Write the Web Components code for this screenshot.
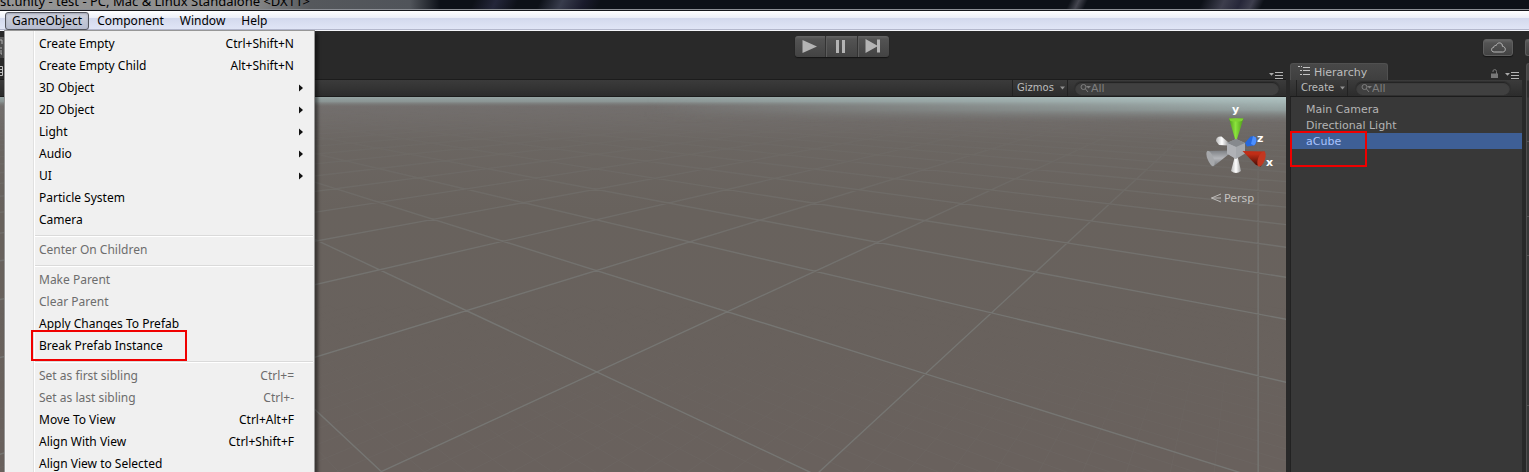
<!DOCTYPE html>
<html lang="en">
<head>
<meta charset="utf-8">
<title>Unity - test</title>
<style>
html,body{margin:0;height:100%}
body{background:#292929;overflow:hidden;font:12px/16px "Noto Sans","Open Sans",sans-serif;color:#000}
</style>
</head>
<body>
<unity-window></unity-window>
<script>
function define(name, html, setup) {
  const t = document.createElement('template');
  t.innerHTML = html;
  customElements.define(name, class extends HTMLElement {
    connectedCallback() {
      if (this.shadowRoot) return;
      this.attachShadow({mode: 'open'}).append(t.content.cloneNode(true));
      if (setup) setup(this, this.shadowRoot);
    }
  });
}

define('title-bar', `<style>
:host{display:flex;align-items:flex-end;height:9px;overflow:hidden;border-bottom:1px solid #8b8e94;box-shadow:0 1px 0 #15171c;margin-bottom:1px;
background:
linear-gradient(90deg,#969696 0,#8b8b8b 250px,#55585c 310px,#50545a 410px,transparent 440px),
linear-gradient(115deg,transparent 430px,#24263a 450px,transparent 470px,transparent 490px,#383c4c 510px,#1a1b2c 530px,transparent 545px,transparent 970px,#44454f 978px,transparent 986px,transparent 1090px,#3d3e4d 1110px,#262739 1125px,#3d3e4d 1136px,transparent 1146px,transparent 1400px,#262838 1440px,transparent 1480px),
#0d1118}
span{white-space:nowrap;font-size:13px;line-height:16px;color:#000}
</style><span><slot></slot></span>`);

define('menu-item', `<style>
:host{display:block;position:relative}
button{all:unset;box-sizing:border-box;display:flex;align-items:center;width:100%;height:22px;padding:0 20px 0 34px;font:inherit;color:#000}
span{flex:1;white-space:nowrap}
:host([disabled]) button{color:#6d6d6d}
svg{display:none;position:absolute;right:11px;top:7px}
:host([submenu]) svg{display:block}
i{display:none}
:host([marked]) i{display:block;position:absolute;left:26px;top:-5px;width:152px;height:27px;border:2px solid #f00000}
</style><button><span><slot></slot></span><kbd-hint></kbd-hint></button>
<svg width="4" height="8"><path d="M0 0.5L4 4L0 7.5Z" fill="#111"/></svg><i></i>`, (h, r) => {
  r.querySelector('kbd-hint').textContent = h.getAttribute('key') || '';
  if (h.hasAttribute('disabled')) r.querySelector('button').disabled = true;
});
define('kbd-hint', `<style>:host{display:block;white-space:nowrap}</style><slot></slot>`);
define('menu-line', `<style>:host{display:block;height:2px;margin:4px 1px 2px 30px;background:linear-gradient(#dadada 50%,#fff 50%)}</style>`);

define('drop-menu', `<style>
:host{display:block;box-sizing:border-box;width:311px;padding-top:2px;border:1px solid #979797;color:#000;
background:linear-gradient(90deg,#f5f5f5 1px,#f0f0f0 1px 28px,#e0e0e0 28px 29px,#fff 29px 30px,#f0f0f0 30px);
box-shadow:3px 3px 3px rgba(0,0,0,.45)}
</style><slot></slot>`);

define('menu-bar', `<style>
:host{display:flex;position:relative;z-index:5;height:18px;padding:0 5px;border-bottom:1px solid #b3b7cc;box-shadow:0 1px 0 #f4f5fa;margin-bottom:1px;
background:linear-gradient(#fff 0,#eceff8 7px,#d3d9ed 7px,#e0e5f6 100%)}
button{all:unset;box-sizing:border-box;height:19px;padding:0 8px;line-height:19px;font-size:12px;white-space:nowrap}
button.on{height:18px;margin-top:1px;padding:0 6px;line-height:16px;border:1px solid #54565e;border-radius:3px;background:linear-gradient(#d0d3dd,#b7bdd0);box-shadow:inset 0 1px 2px #9ea2b2}
drop-menu{position:absolute;left:4px;top:19px}
</style>
<button class="on">GameObject</button><button>Component</button><button>Window</button><button>Help</button>
<drop-menu>
<menu-item key="Ctrl+Shift+N">Create Empty</menu-item>
<menu-item key="Alt+Shift+N">Create Empty Child</menu-item>
<menu-item submenu>3D Object</menu-item>
<menu-item submenu>2D Object</menu-item>
<menu-item submenu>Light</menu-item>
<menu-item submenu>Audio</menu-item>
<menu-item submenu>UI</menu-item>
<menu-item>Particle System</menu-item>
<menu-item>Camera</menu-item>
<menu-line></menu-line>
<menu-item disabled>Center On Children</menu-item>
<menu-line></menu-line>
<menu-item disabled>Make Parent</menu-item>
<menu-item disabled>Clear Parent</menu-item>
<menu-item>Apply Changes To Prefab</menu-item>
<menu-item marked>Break Prefab Instance</menu-item>
<menu-line></menu-line>
<menu-item disabled key="Ctrl+=">Set as first sibling</menu-item>
<menu-item disabled key="Ctrl+-">Set as last sibling</menu-item>
<menu-item key="Ctrl+Alt+F">Move To View</menu-item>
<menu-item key="Ctrl+Shift+F">Align With View</menu-item>
<menu-item>Align View to Selected</menu-item>
</drop-menu>`);

define('tool-bar', `<style>
:host{display:flex;height:32px;align-items:center;background:#292929}
.a{flex:793}.b{flex:596}
.play{display:flex;height:21px;margin-bottom:2px;border-radius:3px;overflow:hidden;box-shadow:0 1px 1px #151515}
button{all:unset;box-sizing:border-box;display:flex;align-items:center;justify-content:center;background:linear-gradient(#656565,#535353 3px,#434343)}
.play button{width:30px;height:21px}
.play button+button{border-left:1px solid #333;box-shadow:inset 1px 0 0 #5c5c5c;width:32px}
.cloud{width:30px;height:17px;border-radius:3px;border:1px solid #5e5e5e;box-shadow:0 1px 1px #151515;margin-right:12px}
.edge{width:4px;height:17px;border-radius:3px 0 0 3px;border:1px solid #5e5e5e;border-right:0}
.tool{width:4px;height:21px;border-right:1px solid #555}
svg{display:block}
</style>
<button class="tool" aria-label="Rect tool"><svg width="3" height="16"><path d="M0 1H2V5M0 9H2M1 11V15H2" fill="none" stroke="#b0b0b0"/></svg></button>
<div class="a"></div>
<div class="play">
<button aria-label="Play"><svg width="15" height="15"><path d="M0.5 1L15 7.5L0.5 14Z" fill="#b4b4b4"/></svg></button>
<button aria-label="Pause"><svg width="10" height="13"><path d="M0 0H3V13H0ZM6 0H9V13H6Z" fill="#b4b4b4"/></svg></button>
<button aria-label="Step"><svg width="16" height="14"><path d="M0.5 0L13 7L0.5 14ZM12 0.5H15V13.5H12Z" fill="#b4b4b4"/></svg></button>
</div>
<div class="b"></div>
<button class="cloud" aria-label="Services"><svg width="15" height="11" viewBox="0 0 15 11"><path d="M3.2 10C1.4 10 .6 8.9 .6 7.6C.6 6.2 1.6 5.4 2.8 5.3C2.9 3.9 3.9 3.2 5.2 3.5C5.8 1.7 7.1.8 8.6.9C10.5 1 11.5 2.3 11.4 4.3C13.2 4.5 14.3 5.7 14.3 7.3C14.3 8.9 13.3 10 11.6 10Z" fill="none" stroke="#b8b8b8"/></svg></button>
<button class="edge" aria-label="Account"></button>`);

define('panel-menu', `<style>:host{display:block}button{all:unset;display:block}svg{display:block}</style>
<button aria-label="Panel menu"><svg width="14" height="8"><path d="M0 2H5L2.5 4.8Z" fill="#aaa"/><path d="M6 1.5H14M6 4.5H14M6 7.5H14" stroke="#b4b4b4"/></svg></button>`);

define('search-field', `<style>
:host{display:flex;align-items:center;box-sizing:border-box;height:13px;padding-left:5px;border-radius:7px;background:#404040;box-shadow:inset 0 1px 1px #222,0 0 0 1px #303030}
input{all:unset;flex:1;min-width:0;height:13px;font:11px/13px "DejaVu Sans",sans-serif;color:#aaa}
input::placeholder{color:#7e7e7e;opacity:1}
svg{display:block}
</style><svg width="11" height="10"><circle cx="3.5" cy="4" r="2.5" fill="none" stroke="#7e7e7e"/><path d="M5.5 6L8 9" stroke="#7e7e7e"/><path d="M6 3H11L8.5 5.5Z" fill="#7e7e7e"/></svg><input type="search" placeholder="All" aria-label="Search">`);

define('drop-button', `<style>
:host{display:block}
button{all:unset;box-sizing:border-box;display:flex;align-items:center;gap:4px;width:100%;height:16px;padding:0 2px 0 4px;border:solid #222;border-width:0 1px;font:10px/16px "DejaVu Sans",sans-serif;color:#bcbcbc}
span{flex:1;white-space:nowrap}
svg{flex:none}
</style><button><span><slot></slot></span><svg width="5" height="4"><path d="M0 0.5H5L2.5 3.5Z" fill="#909090"/></svg></button>`);

define('axis-gizmo', `<style>
:host{display:block}
svg{display:block}text{font:bold 11px "DejaVu Sans",sans-serif;fill:#fff}.p{font:11px "DejaVu Sans",sans-serif;fill:#c4c2c0}
</style><svg width="80" height="110" viewBox="1200 100 80 110">
<defs><linearGradient id="g"><stop stop-color="#4e9a1c"/><stop offset=".45" stop-color="#8be33c"/><stop offset="1" stop-color="#4c9a18"/></linearGradient>
<linearGradient id="w"><stop stop-color="#b8b8b8"/><stop offset=".5" stop-color="#fff"/><stop offset="1" stop-color="#a2a2a2"/></linearGradient>
<linearGradient id="r" x1="0" y1="0" x2="0" y2="1"><stop offset=".2" stop-color="#c12d16"/><stop offset="1" stop-color="#3c0c05"/></linearGradient>
<linearGradient id="s" x1="0" y1="0" x2="0" y2="1"><stop stop-color="#7d8084"/><stop offset=".5" stop-color="#b4b6ba"/><stop offset="1" stop-color="#77797d"/></linearGradient></defs>
<path d="M1228 142L1221.500 136.500Q1216 136 1216 141L1219 145L1228 145.500Z" fill="url(#w)"/>
<path d="M1245 143L1250.500 136.500Q1255 135.500 1256.500 138.500Q1257 143 1254 145.500L1247 146.500Z" fill="#2668dd"/><path d="M1253 136L1256 137.500Q1257 143 1254 145.500L1251 144Z" fill="#4c90ff"/>
<path d="M1229 118.500H1243.500L1237 139H1235Z" fill="url(#g)"/><path d="M1229 118.500H1243.500L1242 121Q1236 122 1230.500 121Z" fill="#7fd431"/>
<path d="M1207 151L1229 150.500L1229 154L1214 166Z" fill="url(#s)"/><ellipse cx="1210.500" cy="158.500" rx="3" ry="8.200" transform="rotate(-22 1210.500 158.500)" fill="#a6a8ab"/>
<path d="M1235 156H1237.500L1241 171Q1236 175 1231 171Z" fill="url(#w)"/>
<path d="M1236 139L1245 143V153.500L1236 159L1227 153.500V143Z" fill="#a5a8ac"/><path d="M1236 139L1245 143L1236 147L1227 143Z" fill="#86898d"/><path d="M1227 143L1236 147V159L1227 153.500Z" fill="#b0b2b6"/>
<path d="M1242.500 151L1265 151.500L1261 166.500L1256 165Z" fill="url(#r)"/><ellipse cx="1261.500" cy="159" rx="3.400" ry="8" transform="rotate(20 1261.500 159)" fill="#c33720"/>
<text x="1232" y="113">y</text><text x="1257" y="142">z</text><text x="1266" y="166">x</text>
<path d="M1221 194L1211.500 198L1221 202M1211.500 198H1221" fill="none" stroke="#bdbbb9"/><text class="p" x="1224" y="202">Persp</text>
</svg>`);

/* Ground plane: grid cell (i, j) mapped to screen by one projective transform. */
define('ground-grid', `<style>:host{display:block}svg{display:block;width:100%;height:100%}</style>
<svg viewBox="0 97 1286 375" preserveAspectRatio="xMaxYMin slice"><defs>
<linearGradient id="f" gradientUnits="userSpaceOnUse" x1="0" y1="97" x2="0" y2="472"><stop offset=".03" stop-color="#fff" stop-opacity=".06"/><stop offset=".15" stop-color="#fff" stop-opacity=".2"/><stop offset=".4" stop-color="#fff" stop-opacity=".75"/><stop offset=".6" stop-color="#fff"/></linearGradient>
<linearGradient id="n" gradientUnits="userSpaceOnUse" x1="0" y1="97" x2="0" y2="472"><stop offset=".55" stop-color="#fff" stop-opacity="0"/><stop offset="1" stop-color="#fff" stop-opacity=".15"/></linearGradient>
<linearGradient id="b" x1="0" y1="0" x2="0" y2="1"><stop stop-color="#757170"/><stop offset=".12" stop-color="#6b6662"/><stop offset=".3" stop-color="#68625d"/><stop offset="1" stop-color="#69615d"/></linearGradient>
<linearGradient id="k" x1="0" y1="0" x2="0" y2="1"><stop stop-color="#96a5a4"/><stop offset=".45" stop-color="#8b9594"/><stop offset="1" stop-color="#757473" stop-opacity="0"/></linearGradient>
<linearGradient id="k2" x1="0" y1="0" x2="0" y2="1"><stop stop-color="#b0c4c3"/><stop offset=".5" stop-color="#93a09f"/><stop offset="1" stop-color="#757473" stop-opacity="0"/></linearGradient>
<linearGradient id="h"><stop offset=".5" stop-color="#fff" stop-opacity="0"/><stop offset="1" stop-color="#fff"/></linearGradient>
<mask id="mf"><rect y="97" width="1286" height="375" fill="url(#f)"/></mask>
<mask id="mn"><rect y="97" width="1286" height="375" fill="url(#n)"/></mask>
<mask id="mh"><rect y="97" width="1286" height="60" fill="url(#h)"/></mask></defs>
<rect y="97" width="1286" height="375" fill="url(#b)"/>
<g mask="url(#mn)"><path class="minor" fill="none" stroke="#7b7b78"/></g>
<g mask="url(#mf)"><path class="major" fill="none" stroke="#767673" stroke-width="1.400"/></g>
<rect y="97" width="1286" height="10" fill="url(#k)"/>
<g mask="url(#mh)"><rect y="97" width="1286" height="26" fill="url(#k2)"/></g>
</svg>`, (h, r) => {
  const A = .246, B = .2525;
  const pt = (i, j) => {
    const w = 1 + A * i + B * j;
    return ((597 + 309.5 * i - 12.9 * j) / w).toFixed(1) + ' ' + ((372 + 16.4 * i + 17 * j) / w).toFixed(1);
  };
  const lines = (step, from, to, far) => {
    let d = '';
    for (let k = from; k <= to; k += step) {
      d += 'M' + pt((-.5 - B * k) / A, k) + 'L' + pt(far - B * k / A, k);
      d += 'M' + pt(k, (-.5 - A * k) / B) + 'L' + pt(k, far - A * k / B);
    }
    return d;
  };
  r.querySelector('.major').setAttribute('d', lines(1, -24, 40, 60));
  r.querySelector('.minor').setAttribute('d', lines(.1, -4, 6, 6));
});

define('scene-panel', `<style>
:host{display:flex;flex-direction:column;min-width:0}
.tabs{display:flex;height:16px;align-items:flex-end;justify-content:space-between}
.tabs svg{display:block;margin-bottom:3px}
panel-menu{margin:0 3px 0 0}
.bar{display:flex;align-items:center;justify-content:flex-end;height:16px;border:solid #1c1c1c;border-width:1px 0;background:linear-gradient(#3b3b3b,#2c2c2c);padding-right:7px}
drop-button{width:56px;margin-right:7px}
search-field{width:204px}
.view{position:relative;flex:1;min-height:0}
ground-grid{height:100%}
axis-gizmo{position:absolute;right:6px;top:3px}
</style>
<div class="tabs"><svg width="3" height="10"><path d="M0 .5H2.500V9.500H0M0 3.500H2M0 6.500H2" fill="none" stroke="#c0c0c0"/></svg><panel-menu></panel-menu></div>
<div class="bar"><drop-button>Gizmos</drop-button><search-field></search-field></div>
<div class="view"><ground-grid></ground-grid><axis-gizmo></axis-gizmo></div>`);

define('tree-row', `<style>
:host{display:block;position:relative;height:16px;padding-left:14px;font:11px/18px "DejaVu Sans",sans-serif;color:#b4b4b4}
:host([selected]){background:#3e5f96;color:#a9c3ff}
i{display:none}
:host([selected]) i{display:block;position:absolute;left:-2px;top:-2px;width:73px;height:32px;border:2px solid #f00000}
</style><slot></slot><i></i>`);

define('hierarchy-panel', `<style>
:host{display:flex;flex-direction:column;box-sizing:border-box}
.tabs{display:flex;height:17px;align-items:flex-end}
.tab{box-sizing:border-box;display:flex;align-items:center;gap:4px;width:98px;height:17px;padding:2px 0 0 7px;border:1px solid #505050;border-bottom:0;border-radius:3px 3px 0 0;background:linear-gradient(#484848,#3f3f3f);font:11px/14px "DejaVu Sans",sans-serif;color:#bdbdbd}
.tab svg{margin-bottom:4px}
.sp{flex:1}
.lock{margin:0 6px 2px 0}
panel-menu{margin:0 3px 1px 0}
svg{display:block}
.bar{display:flex;align-items:center;height:16px;border-bottom:1px solid #1c1c1c;background:linear-gradient(#3b3b3b,#2c2c2c);padding-left:6px}
drop-button{width:52px;margin-right:8px}
search-field{width:154px}
.list{flex:1;background:#383838;border:solid #222;border-width:0 0 0 1px;padding:4px 0 0 1px}
</style>
<div class="tabs"><div class="tab"><svg width="12" height="10"><path d="M0 .5H2M3 .5H4M2 4.500H4M2 8.500H4M5 1.500H12M5 4.500H12M5 8.500H12" stroke="#c4c4c4"/></svg>Hierarchy</div><div class="sp"></div>
<svg class="lock" width="8" height="9"><path d="M0 4.500H7V9H0Z" fill="#777"/><path d="M2 3V2Q2 .6 3.800 .6Q5.500 .6 5.500 2.500V5" fill="none" stroke="#777"/></svg><panel-menu></panel-menu></div>
<div class="bar"><drop-button>Create</drop-button><search-field></search-field></div>
<div class="list"><tree-row>Main Camera</tree-row><tree-row>Directional Light</tree-row><tree-row selected>aCube</tree-row></div>`);

define('inspector-edge', `<style>
:host{display:block;box-sizing:border-box;border:solid #505050;border-width:1px 0 0 1px;border-radius:3px 0 0 0;
background:linear-gradient(#454545 0 16px,#2e2e2e 17px 33px,#383838 34px 77px,#555 77px 78px,#383838 78px 152px,#555 152px 153px,#383838 153px 191px,#555 191px 192px,#383838 192px 341px,#555 341px 342px,#383838 342px)}
</style>`);

define('unity-window', `<style>
:host{display:flex;flex-direction:column;height:100vh;overflow:hidden}
.dock{flex:1;min-height:0;display:grid;grid-template-columns:minmax(0,1fr) 232px 3px;gap:4px;background:#292929}
</style>
<title-bar>st.unity - test - PC, Mac &amp; Linux Standalone &lt;DX11&gt;</title-bar>
<menu-bar></menu-bar><tool-bar></tool-bar>
<div class="dock"><scene-panel></scene-panel><hierarchy-panel></hierarchy-panel><inspector-edge></inspector-edge></div>`);
</script>
</body>
</html>
